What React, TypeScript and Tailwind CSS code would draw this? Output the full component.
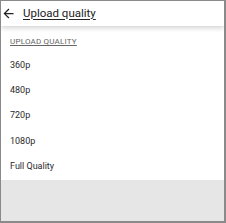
import React from 'react';

const options = ['360p', '480p', '720p', '1080p', 'Full Quality'];

export default function App() {
  return (
    <div
      className="w-[226px] h-[223px] flex flex-col overflow-hidden bg-[#e6e6e6] border-t border-l border-r-2 border-b-2 border-[#8a8a8a]"
      style={{ fontFamily: 'Roboto, "Liberation Sans", sans-serif' }}
    >
      {/* Toolbar */}
      <div className="h-[25px] shrink-0 flex items-center bg-white relative z-10 shadow-[0_2px_5px_rgba(0,0,0,0.18)]">
        <svg width="15" height="15" viewBox="0 0 24 24" className="text-[#222]">
          <path d="M20 11H7.83l5.59-5.59L12 4l-8 8 8 8 1.41-1.41L7.83 13H20v-2z" fill="currentColor" />
        </svg>
        <span className="ml-[7px] text-[11.5px] leading-none text-[#222] underline underline-offset-2 decoration-1">
          Upload quality
        </span>
      </div>

      {/* List */}
      <div className="bg-white flex flex-col">
        <div className="pl-[9px] pt-[11px] pb-[6px] text-[8px] leading-[10px] text-[#666] underline underline-offset-1 tracking-[0.2px]">
          UPLOAD QUALITY
        </div>
        {options.map((o) => (
          <div key={o} className="h-[25.3px] flex items-center pl-[9px] text-[9px] text-[#2a2a2a]">
            {o}
          </div>
        ))}
        <div className="h-[1px]" />
      </div>
    </div>
  );
}
